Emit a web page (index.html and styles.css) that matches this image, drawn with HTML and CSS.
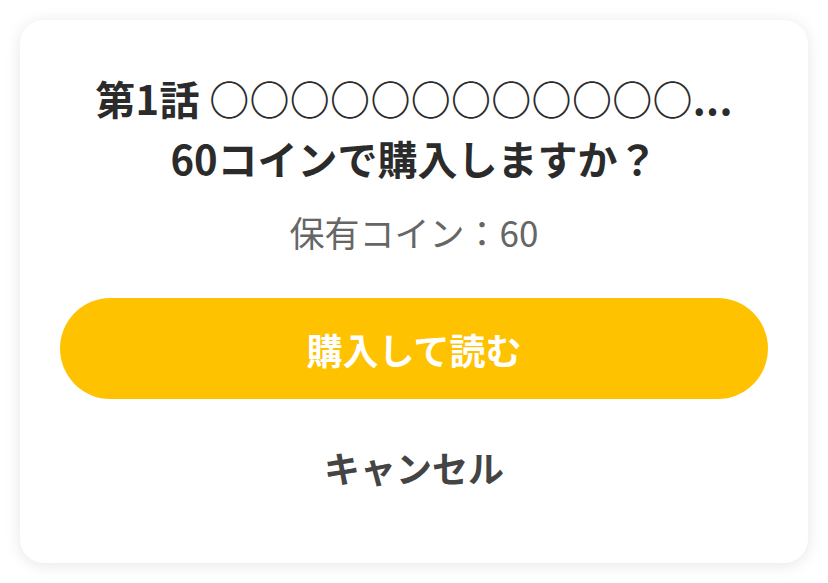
FILE: index.html
```html
<!DOCTYPE html>
<html lang="ja">
<head>
<meta charset="utf-8">
<title>購入確認</title>
<link rel="stylesheet" href="styles.css">
</head>
<body>
  <div class="dialog">
    <h1 class="dialog-title">
      <span class="dialog-title-line">第1話 ○○○○○○○○○○○○...</span>
      <span class="dialog-title-line">60コインで購入しますか？</span>
    </h1>
    <p class="dialog-balance">保有コイン：60</p>
    <button class="btn-primary" type="button">購入して読む</button>
    <button class="btn-cancel" type="button">キャンセル</button>
  </div>
</body>
</html>
```

FILE: styles.css
```css
* {
  box-sizing: border-box;
}

html, body {
  margin: 0;
  padding: 0;
  background: #ffffff;
}

body {
  padding: 20px;
  font-family: "Noto Sans CJK JP", "Noto Sans", sans-serif;
}

.dialog {
  width: 788px;
  height: 543px;
  background: #ffffff;
  border-radius: 24px;
  box-shadow: 0 2px 16px rgba(0, 0, 0, 0.1);
  padding: 48px 40px 0;
  display: flex;
  flex-direction: column;
  align-items: center;
}

.dialog-title {
  margin: 0;
  font-size: 40px;
  line-height: 60px;
  font-weight: 700;
  color: #2b2b2b;
  text-align: center;
  display: flex;
  flex-direction: column;
}

.dialog-title-line {
  white-space: nowrap;
}

.dialog-title-line:first-child {
  letter-spacing: 0.3px;
}

.dialog-balance {
  margin: 18px 0 0;
  font-size: 35px;
  line-height: 51px;
  color: #666666;
}

.btn-primary {
  margin-top: 41px;
  width: 100%;
  height: 101px;
  border: none;
  border-radius: 51px;
  background: #ffc200;
  color: #ffffff;
  font-family: inherit;
  font-size: 36px;
  font-weight: 700;
  cursor: pointer;
}

.btn-cancel {
  margin-top: 41px;
  border: none;
  background: none;
  padding: 0;
  font-family: inherit;
  font-size: 36px;
  line-height: 54px;
  font-weight: 700;
  color: #444444;
  cursor: pointer;
}
```
